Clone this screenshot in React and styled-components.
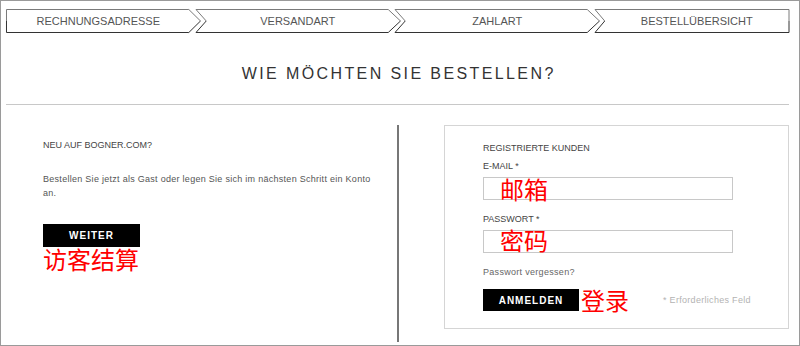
import React from "react";
import styled, { createGlobalStyle } from "styled-components";

const Global = createGlobalStyle`
  html, body { margin: 0; padding: 0; background: #fff; }
  body { font-family: "Liberation Sans", Arial, sans-serif; }
  * { box-sizing: border-box; }
`;

const Frame = styled.div`
  width: 800px;
  height: 346px;
  border: 1px solid #9a9a9a;
  padding: 8px 10px 3px 5px;
  display: flex;
  flex-direction: column;
  background: #fff;
`;

const StepBar = styled.div`
  display: flex;
  height: 24px;
`;

const Step = styled.div`
  position: relative;
  flex: 1;
  margin-left: ${(p) => (p.$notch ? "-5px" : "0")};
  padding-left: ${(p) => (p.$notch ? "10px" : "0")};
  padding-right: ${(p) => (p.$tip ? "10px" : "0")};
  display: flex;
  align-items: center;
  justify-content: center;
  font-size: 11px;
  color: #555;
  text-transform: uppercase;
`;

const StepShape = styled.svg`
  position: absolute;
  inset: 0;
  width: 100%;
  height: 100%;
  overflow: visible;
`;

const StepLabel = styled.span`
  position: relative;
`;

function StepItem({ label, notch, tip }) {
  const leftTop = notch ? "M10,12 L0,0.5" : "M0.5,12 L0.5,0.5";
  const leftBot = notch ? "M10,12 L0,23.5" : "M0.5,12 L0.5,23.5";
  const rx = tip ? 188 : 199.5;
  const rTip = tip ? 200 : 199.5;
  return (
    <Step $notch={notch} $tip={tip}>
      <StepShape viewBox="0 0 200 24" preserveAspectRatio="none">
        <path
          d={`${leftTop} L${rx},0.5 L${rTip},12`}
          fill="none"
          stroke="#7a7a7a"
          strokeWidth="1"
          vectorEffect="non-scaling-stroke"
        />
        <path
          d={`${leftBot} L${rx},23.5 L${rTip},12`}
          fill="none"
          stroke="#333"
          strokeWidth="1"
          vectorEffect="non-scaling-stroke"
        />
      </StepShape>
      <StepLabel>{label}</StepLabel>
    </Step>
  );
}

const Heading = styled.h1`
  margin: 33px 0 0;
  padding-left: 2.4px;
  font-size: 16px;
  line-height: 16px;
  font-weight: 400;
  letter-spacing: 2.4px;
  color: #333;
  text-align: center;
`;

const Rule = styled.div`
  margin-top: 22px;
  height: 1px;
  background: #c8c8c8;
`;

const Content = styled.div`
  flex: 1;
  margin-top: 20px;
  display: grid;
  grid-template-columns: 391px 2px 1fr;
`;

const Guest = styled.div`
  padding: 14px 0 0 37px;
  display: flex;
  flex-direction: column;
  align-items: flex-start;
`;

const SmallCaps = styled.div`
  font-size: 9px;
  line-height: 12px;
  color: #444;
  text-transform: uppercase;
  margin-top: ${(p) => p.$mt || 0}px;
`;

const Paragraph = styled.p`
  margin: 22px 0 0;
  max-width: 334px;
  font-size: 9px;
  line-height: 13.5px;
  letter-spacing: 0.28px;
  color: #555;
`;

const BlackButton = styled.button`
  width: ${(p) => p.$w}px;
  height: ${(p) => p.$h}px;
  margin-top: ${(p) => p.$mt || 0}px;
  padding: 0;
  border: none;
  background: #000;
  color: #fff;
  font-family: "Liberation Sans", Arial, sans-serif;
  font-weight: 700;
  font-size: 10px;
  letter-spacing: 1px;
  display: flex;
  align-items: center;
  justify-content: center;
  flex-shrink: 0;
`;

const RedNote = styled.span`
  color: #ff0000;
  font-family: "Noto Sans CJK SC", sans-serif;
  font-size: 24px;
  line-height: 24px;
  white-space: nowrap;
`;

const OverlayNote = styled(RedNote)`
  position: absolute;
  left: 17px;
  top: ${(p) => p.$top}px;
`;

const Divider = styled.div`
  background: #777;
`;

const LoginCol = styled.div`
  padding-left: 45px;
`;

const LoginBox = styled.div`
  height: 204px;
  border: 1px solid #d5d5d5;
  padding: 16px 0 0 38px;
  display: flex;
  flex-direction: column;
  align-items: flex-start;
`;

const FieldWrap = styled.div`
  position: relative;
  width: 250px;
  height: 23px;
  margin-top: 5px;
`;

const Input = styled.input`
  width: 100%;
  height: 100%;
  border: 1px solid #c8c8c8;
  background: #fff;
  padding: 0 8px;
  outline: none;
`;

const HelpText = styled.div`
  margin-top: ${(p) => p.$mt || 0}px;
  font-size: 9px;
  line-height: 12px;
  letter-spacing: 0.3px;
  color: ${(p) => p.$color || "#666"};
  white-space: nowrap;
`;

const ActionRow = styled.div`
  margin-top: 10px;
  display: flex;
  align-items: center;
`;

const SideNote = styled(RedNote)`
  margin-left: 2px;
`;

const Required = styled(HelpText)`
  margin-left: 34px;
`;

export default function App() {
  return (
    <>
      <Global />
      <Frame>
        <StepBar>
          <StepItem label="Rechnungsadresse" tip />
          <StepItem label="Versandart" notch tip />
          <StepItem label="Zahlart" notch tip />
          <StepItem label="Bestellübersicht" notch />
        </StepBar>
        <Heading>WIE MÖCHTEN SIE BESTELLEN?</Heading>
        <Rule />
        <Content>
          <Guest>
            <SmallCaps>Neu auf Bogner.com?</SmallCaps>
            <Paragraph>
              Bestellen Sie jetzt als Gast oder legen Sie sich im nächsten
              Schritt ein Konto an.
            </Paragraph>
            <BlackButton $w={97} $h={23} $mt={24}>WEITER</BlackButton>
            <RedNote>访客结算</RedNote>
          </Guest>
          <Divider />
          <LoginCol>
            <LoginBox>
              <SmallCaps>Registrierte Kunden</SmallCaps>
              <SmallCaps $mt={6}>E-Mail *</SmallCaps>
              <FieldWrap>
                <Input type="text" />
                <OverlayNote $top={0}>邮箱</OverlayNote>
              </FieldWrap>
              <SmallCaps $mt={13}>Passwort *</SmallCaps>
              <FieldWrap>
                <Input type="password" />
                <OverlayNote $top={-2}>密码</OverlayNote>
              </FieldWrap>
              <HelpText $mt={13}>Passwort vergessen?</HelpText>
              <ActionRow>
                <BlackButton $w={96} $h={22}>ANMELDEN</BlackButton>
                <SideNote>登录</SideNote>
                <Required $color="#b3b3b3">* Erforderliches Feld</Required>
              </ActionRow>
            </LoginBox>
          </LoginCol>
        </Content>
      </Frame>
    </>
  );
}
